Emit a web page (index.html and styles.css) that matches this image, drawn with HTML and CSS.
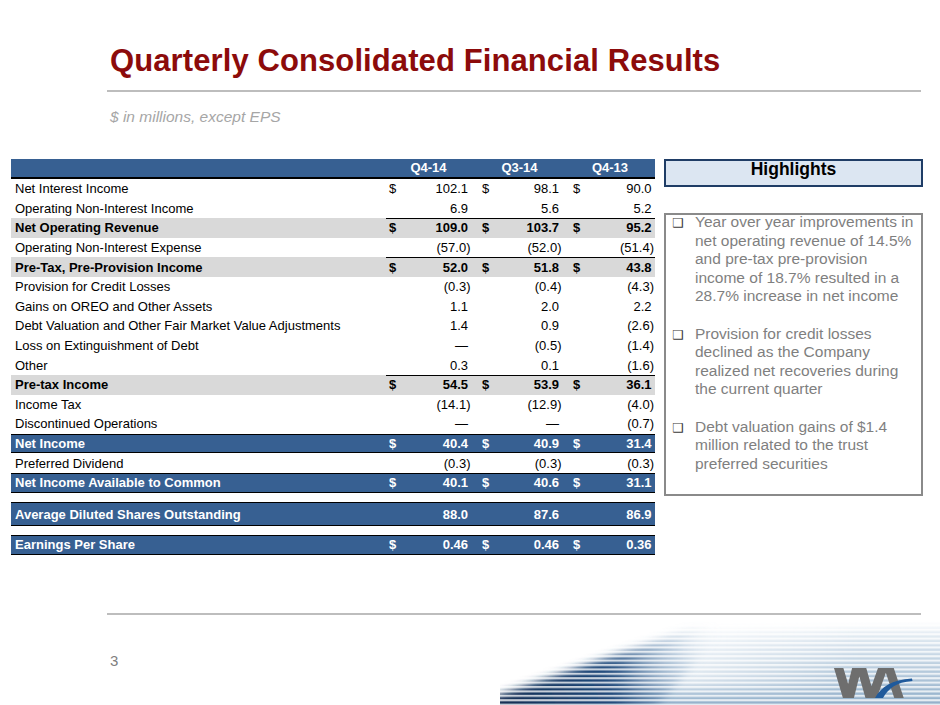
FILE: index.html
```html
<!DOCTYPE html>
<html lang="en">
<head>
<meta charset="utf-8">
<title>Quarterly Consolidated Financial Results</title>
<link rel="stylesheet" href="styles.css">
</head>
<body>
<div class="slide">
  <header class="head">
    <h1 class="title">Quarterly Consolidated Financial Results</h1>
    <div class="rule"></div>
    <p class="subtitle">$ in millions, except EPS</p>
  </header>

  <main class="content">
    <section class="fin">
      <div class="thead"><span></span><span>Q4-14</span><span>Q3-14</span><span>Q4-13</span></div>

      <div class="row"><span class="l">Net Interest Income</span><span class="c">$</span><span class="v">102.1</span><span class="c">$</span><span class="v">98.1</span><span class="c">$</span><span class="v">90.0</span></div>
      <div class="row"><span class="l">Operating Non-Interest Income</span><span class="c"></span><span class="v">6.9</span><span class="c"></span><span class="v">5.6</span><span class="c"></span><span class="v">5.2</span></div>
      <div class="row sub"><span class="l">Net Operating Revenue</span><span class="c">$</span><span class="v">109.0</span><span class="c">$</span><span class="v">103.7</span><span class="c">$</span><span class="v">95.2</span></div>
      <div class="row"><span class="l">Operating Non-Interest Expense</span><span class="c"></span><span class="v"><span class="n">(57.0)</span></span><span class="c"></span><span class="v"><span class="n">(52.0)</span></span><span class="c"></span><span class="v"><span class="n">(51.4)</span></span></div>
      <div class="row sub"><span class="l">Pre-Tax, Pre-Provision Income</span><span class="c">$</span><span class="v">52.0</span><span class="c">$</span><span class="v">51.8</span><span class="c">$</span><span class="v">43.8</span></div>
      <div class="row"><span class="l">Provision for Credit Losses</span><span class="c"></span><span class="v"><span class="n">(0.3)</span></span><span class="c"></span><span class="v"><span class="n">(0.4)</span></span><span class="c"></span><span class="v"><span class="n">(4.3)</span></span></div>
      <div class="row"><span class="l">Gains on OREO and Other Assets</span><span class="c"></span><span class="v">1.1</span><span class="c"></span><span class="v">2.0</span><span class="c"></span><span class="v">2.2</span></div>
      <div class="row"><span class="l">Debt Valuation and Other Fair Market Value Adjustments</span><span class="c"></span><span class="v">1.4</span><span class="c"></span><span class="v">0.9</span><span class="c"></span><span class="v"><span class="n">(2.6)</span></span></div>
      <div class="row"><span class="l">Loss on Extinguishment of Debt</span><span class="c"></span><span class="v">—</span><span class="c"></span><span class="v"><span class="n">(0.5)</span></span><span class="c"></span><span class="v"><span class="n">(1.4)</span></span></div>
      <div class="row"><span class="l">Other</span><span class="c"></span><span class="v">0.3</span><span class="c"></span><span class="v">0.1</span><span class="c"></span><span class="v"><span class="n">(1.6)</span></span></div>
      <div class="row sub"><span class="l">Pre-tax Income</span><span class="c">$</span><span class="v">54.5</span><span class="c">$</span><span class="v">53.9</span><span class="c">$</span><span class="v">36.1</span></div>
      <div class="row"><span class="l">Income Tax</span><span class="c"></span><span class="v"><span class="n">(14.1)</span></span><span class="c"></span><span class="v"><span class="n">(12.9)</span></span><span class="c"></span><span class="v"><span class="n">(4.0)</span></span></div>
      <div class="row"><span class="l">Discontinued Operations</span><span class="c"></span><span class="v">—</span><span class="c"></span><span class="v">—</span><span class="c"></span><span class="v"><span class="n">(0.7)</span></span></div>
      <div class="row tot"><span class="l">Net Income</span><span class="c">$</span><span class="v">40.4</span><span class="c">$</span><span class="v">40.9</span><span class="c">$</span><span class="v">31.4</span></div>
      <div class="row"><span class="l">Preferred Dividend</span><span class="c"></span><span class="v"><span class="n">(0.3)</span></span><span class="c"></span><span class="v"><span class="n">(0.3)</span></span><span class="c"></span><span class="v"><span class="n">(0.3)</span></span></div>
      <div class="row tot"><span class="l">Net Income Available to Common</span><span class="c">$</span><span class="v">40.1</span><span class="c">$</span><span class="v">40.6</span><span class="c">$</span><span class="v">31.1</span></div>

      <div class="row tot avg"><span class="l">Average Diluted Shares Outstanding</span><span class="c"></span><span class="v">88.0</span><span class="c"></span><span class="v">87.6</span><span class="c"></span><span class="v">86.9</span></div>

      <div class="row tot eps"><span class="l">Earnings Per Share</span><span class="c">$</span><span class="v">0.46</span><span class="c">$</span><span class="v">0.46</span><span class="c">$</span><span class="v">0.36</span></div>
    </section>

    <aside class="side">
      <div class="hl">Highlights</div>
      <div class="notes">
        <div class="note"><span class="bul">❑</span><p>Year over year improvements in<br>net operating revenue of 14.5%<br>and pre-tax pre-provision<br>income of 18.7% resulted in a<br>28.7% increase in net income</p></div>
        <div class="note"><span class="bul">❑</span><p>Provision for credit losses<br>declined as the Company<br>realized net recoveries during<br>the current quarter</p></div>
        <div class="note"><span class="bul">❑</span><p>Debt valuation gains of $1.4<br>million related to the trust<br>preferred securities</p></div>
      </div>
    </aside>
  </main>

  <div class="rule bottom"></div>

  <footer class="foot">
    <span class="pnum">3</span>
    <svg class="deco" width="440" height="85" viewBox="0 0 440 85" aria-hidden="true">
      <defs>
        <linearGradient id="lightG" x1="0" y1="4" x2="0" y2="85" gradientUnits="userSpaceOnUse">
          <stop offset="0" stop-color="#f2f6fa"/>
          <stop offset="0.3" stop-color="#cfdde9"/>
          <stop offset="1" stop-color="#90aec9"/>
        </linearGradient>
        <linearGradient id="fadeG" x1="150" y1="0" x2="360" y2="0" gradientUnits="userSpaceOnUse">
          <stop offset="0" stop-color="#ffffff" stop-opacity="0.75"/>
          <stop offset="1" stop-color="#ffffff" stop-opacity="0"/>
        </linearGradient>
        <linearGradient id="darkG" x1="0" y1="85" x2="220" y2="4" gradientUnits="userSpaceOnUse">
          <stop offset="0" stop-color="#122d52"/>
          <stop offset="0.45" stop-color="#21497a"/>
          <stop offset="0.78" stop-color="#5a85af" stop-opacity="0.65"/>
          <stop offset="1" stop-color="#a9c2d9" stop-opacity="0"/>
        </linearGradient>
        <linearGradient id="bandX" x1="0" y1="0" x2="1" y2="0">
          <stop offset="0" stop-color="#ffffff"/>
          <stop offset="0.55" stop-color="#ffffff"/>
          <stop offset="1" stop-color="#000000"/>
        </linearGradient>
        <mask id="bandMask" maskContentUnits="userSpaceOnUse">
          <polygon points="-10,95 -10,78 200,6 228,6 150,95" fill="url(#bandX)"/>
        </mask>
        <filter id="soft" x="-10%" y="-30%" width="120%" height="160%"><feGaussianBlur stdDeviation="4"/></filter>
        <filter id="soft2" x="-20%" y="-30%" width="140%" height="160%"><feGaussianBlur stdDeviation="8"/></filter>
        <pattern id="lines" width="10" height="4.4" patternUnits="userSpaceOnUse">
          <rect width="10" height="2.1" fill="#ffffff" fill-opacity="0.75"/>
        </pattern>
        <clipPath id="wclip"><rect x="0" y="3" width="80" height="30"/></clipPath>
      </defs>
      <g filter="url(#soft)">
        <polygon points="-10,95 -10,82 185,12 450,7 450,95" fill="url(#lightG)"/>
      </g>
      <polygon points="120,-10 360,-10 360,70 120,70" fill="url(#fadeG)" filter="url(#soft2)"/>
      <g filter="url(#soft)">
        <rect x="-10" y="0" width="260" height="95" fill="url(#darkG)" mask="url(#bandMask)"/>
      </g>
      <rect width="440" height="85" fill="url(#lines)"/>
      <g transform="translate(330,45)">
        <polyline clip-path="url(#wclip)" points="6,-6 18.5,36 29,-6 41,36 56,-6 70,36" fill="none" stroke="#6e6e6e" stroke-width="9" stroke-linejoin="miter" stroke-miterlimit="10"/>
        <path d="M45,33 C51,22 62,14.5 82,13.5 L82.5,16 C66,17 58,24 53,33 Z" fill="#1f5a9c"/>
      </g>
    </svg>
  </footer>
</div>
</body>
</html>
```

FILE: styles.css
```css
* { box-sizing: border-box; }

html, body {
  margin: 0;
  padding: 0;
  background: #ffffff;
}

body {
  font-family: "Liberation Sans", Arial, sans-serif;
  color: #000;
}

.slide {
  width: 940px;
  height: 705px;
  overflow: hidden;
  display: flex;
  flex-direction: column;
}

/* ---------- header ---------- */
.head {
  padding-top: 43px;
}

.title {
  margin: 0 0 0 110px;
  font-size: 31px;
  line-height: 35px;
  letter-spacing: 0.1px;
  font-weight: bold;
  color: #8c0b0b;
}

.rule {
  margin: 12px 0 0 107px;
  width: 814px;
  height: 2px;
  background: #bdbdbd;
}

.subtitle {
  margin: 16px 0 0 110px;
  font-size: 15.5px;
  line-height: 18px;
  font-style: italic;
  color: #a6a6a6;
}

/* ---------- content ---------- */
.content {
  margin-top: 33px;
  padding-left: 11px;
  display: flex;
  align-items: flex-start;
}

.fin {
  width: 644px;
  font-size: 13px;
}

.thead {
  display: grid;
  grid-template-columns: 372px 91px 91px 90px;
  height: 20px;
  background: #376092;
  border-bottom: 2px solid #000;
  color: #fff;
  font-weight: bold;
  align-items: center;
  line-height: 16px;
}

.thead span { text-align: center; }

.row {
  display: grid;
  grid-template-columns: 375px 14px 79px 14px 77px 14px 71px;
  height: 19.6px;
  align-items: center;
  line-height: 15px;
  white-space: nowrap;
}

.row .l { padding-left: 4px; }
.row .c { padding-left: 3px; }
.row .v { text-align: right; }
.row > :nth-child(3) { padding-right: 11px; }
.row > :nth-child(5) { padding-right: 11px; }
.row > :nth-child(7) { padding-right: 3.5px; }

.n { margin-right: -2.5px; }

.row.sub {
  font-weight: bold;
  background: linear-gradient(#000, #000) 375px 0 / 269px 1px no-repeat, #d9d9d9;
}

.row.tot {
  font-weight: bold;
  color: #fff;
  background: #376092;
  border-top: 1px solid #000;
  border-bottom: 1px solid #000;
}

.row.avg {
  height: 24px;
  margin-top: 9.5px;
}

.row.eps {
  height: 20.5px;
  margin-top: 8.5px;
}

/* ---------- side ---------- */
.side {
  width: 259px;
  margin-left: 9px;
}

.hl {
  height: 28px;
  border: 2px solid #1f3d66;
  background: #dce6f2;
  font-weight: bold;
  font-size: 17.5px;
  line-height: 17px;
  text-align: center;
}

.notes {
  margin-top: 26px;
  height: 283px;
  border: 2px solid #8a8a8a;
  padding: 0 4px 0 6px;
}

.note {
  display: flex;
  align-items: baseline;
  margin-bottom: 18.6px;
}

.note:first-child { margin-top: -2px; }

.bul {
  flex: 0 0 23px;
  font-family: "DejaVu Sans", sans-serif;
  font-size: 12.5px;
  color: #3a3a3a;
}

.note p {
  margin: 0;
  font-size: 15.5px;
  line-height: 18.6px;
  color: #7f7f7f;
  white-space: nowrap;
}

/* ---------- footer ---------- */
.rule.bottom {
  margin-top: 58px;
}

.foot {
  display: flex;
  align-items: flex-start;
  flex: 1;
}

.pnum {
  padding: 37px 0 0 110px;
  font-size: 15px;
  line-height: 17px;
  color: #7f7f7f;
}

.deco {
  display: block;
  margin: 5px 0 0 auto;
  flex: 0 0 auto;
}
```
